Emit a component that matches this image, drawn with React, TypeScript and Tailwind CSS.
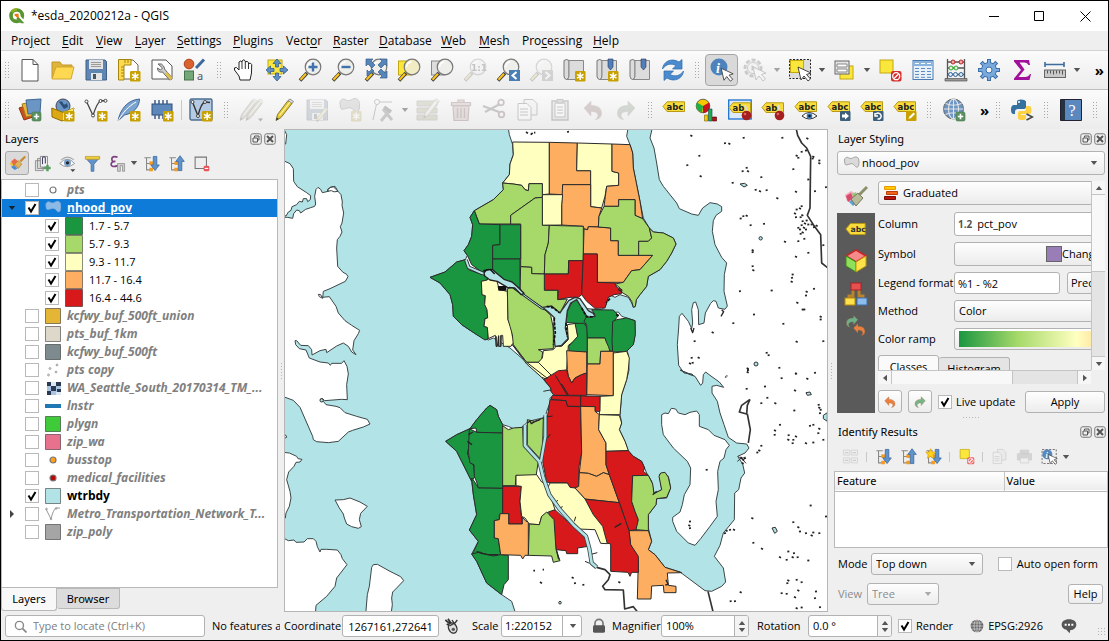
import React from "react";

type Kids = { children?: React.ReactNode };

const DARK = "#1a9641";
const LIGHT = "#a6d96a";
const PALE = "#ffffc0";
const ORANGE = "#fdae61";
const RED = "#d7191c";
const WATER = "#b2e3e6";

/* ---------- icon helpers ---------- */

function Ico({ children, className = "size-6" }: Kids & { className?: string }) {
  return (
    <svg viewBox="0 0 24 24" className={className + " shrink-0"} fill="none" aria-hidden="true">
      {children}
    </svg>
  );
}

function Star() {
  return (
    <g>
      <rect x="13" y="13" width="10.5" height="10.5" rx="1.2" fill="#c8a100" />
      <path d="M18.2 14.5v7.5M15 16.4l6.5 3.8M21.5 16.4l-6.5 3.8" stroke="#fff" strokeWidth="1.5" />
    </g>
  );
}

function Plus() {
  return (
    <g>
      <rect x="14" y="14" width="9" height="9" rx="1.5" fill="#5a9160" stroke="#467a4c" strokeWidth=".6" />
      <path d="M18.5 15.8v5.4M15.8 18.5h5.4" stroke="#fff" strokeWidth="1.6" />
    </g>
  );
}

function Lens({ fill = "#eeeeea" }: { fill?: string }) {
  return (
    <g>
      <path d="M2 22.5l7-7.5" stroke="#404040" strokeWidth="3.6" />
      <path d="M2.5 21.8l5.5-6" stroke="#fcc419" strokeWidth="2" />
      <circle cx="15" cy="9" r="7.8" fill={fill} stroke="#777" strokeWidth="1.2" />
      <path d="M9.5 9a5.5 5.5 0 0 1 5-5" stroke="#fff" strokeWidth="1.5" />
    </g>
  );
}

function Pointer() {
  return <path d="M10 9l3 13 3-4 4 5 2.5-2-4-4.500 4.500-1.500z" fill="#fff" stroke="#444" />;
}

function Tag({ y = 1, text = "abc" }: { y?: number; text?: string }) {
  return (
    <g transform={"translate(0 " + y + ")"}>
      <path d="M1 5.5L5 .8h17.500v9.700H5z" fill="#f9dc3c" stroke="#b79a12" />
      <text x="4.5" y="8.6" fontSize="8.5" fontWeight="bold" fontFamily="DejaVu Sans, sans-serif" fill="#222">
        {text}
      </text>
    </g>
  );
}

function Pin() {
  return (
    <g>
      <path d="M17 7l2.5 9" stroke="#ddd" strokeWidth="2" />
      <circle cx="18.5" cy="17.5" r="4.8" fill="#a51d1d" />
      <circle cx="17" cy="16" r="1.3" fill="#d66" />
    </g>
  );
}

function Pencil({ fill = "#e8c832" }: { fill?: string }) {
  return (
    <g>
      <path d="M4 22.5l1.500-6L16 2.500l4 3L9 19.500z" fill={fill} stroke="#77712f" strokeWidth=".9" />
      <path d="M16 2.5l2-1.500 3.500 2.500-1.500 2z" fill="#ddd" stroke="#777" strokeWidth=".8" />
      <path d="M7.5 17.500L18 4" stroke="#fff7b0" strokeWidth="1.2" />
      <path d="M4 22.5l.8-3 2 1.500z" fill="#333" />
    </g>
  );
}

function Book({ children }: Kids) {
  return (
    <g>
      <path d="M2 2.5q3-2 5 0V18q0 3-2.500 3.500Q2 21 2 18z" fill="#dcdcdc" stroke="#777" />
      <path d="M7 2.5h14.500v19H4.500Q7 21 7 18z" fill="#dcdcdc" stroke="#888" />
      {children}
    </g>
  );
}

function Undo({ color }: { color: string }) {
  return (
    <path
      d="M3 10l7-7v4.500c7 0 10.500 2.500 10.500 8 0 3-2 5.500-6 6 2-1.500 2.800-3 2.300-5-.6-2.200-3-3-6.800-3V18z"
      fill={color}
      stroke="#8a5a3c"
      strokeWidth=".5"
    />
  );
}

function Redo({ color }: { color: string }) {
  return (
    <g transform="matrix(-1 0 0 1 24 0)">
      <Undo color={color} />
    </g>
  );
}

function Tree({ up = false, star = false }: { up?: boolean; star?: boolean }) {
  return (
    <Ico className="size-[17px]">
      <path d="M2 4h9M5 4v17h7M5 12h7" stroke="#888" strokeWidth="1.5" />
      <rect x="9" y="9" width="5" height="5" fill="#f79a1e" />
      <rect x="9" y="18" width="5" height="5" fill="#f79a1e" />
      {up ? (
        <path d="M17 1l-6 8h3.500v13h5V9H23z" fill="#5f93c9" stroke="#2f5f96" />
      ) : (
        <path d="M17 22l-6-8h3.500V2h5v12H23z" fill="#5f93c9" stroke="#2f5f96" />
      )}
      {star && <path d="M8 1l2 4.500 5 .5-3.500 3.500 1 5L8 12l-4.500 2.500 1-5L1 6l5-.5z" fill="#ffd21e" stroke="#e39a00" />}
    </Ico>
  );
}

function Doc() {
  return <path d="M4 1.5h11l5 5V23H4zM15 1.500v5h5" fill="#fff" stroke="#555" />;
}

function Floppy() {
  return (
    <g>
      <path d="M2 2h19l1.500 1.500V22H2z" fill="#5f86b3" stroke="#3f5f86" />
      <rect x="5" y="2" width="14" height="9" fill="#e4e4e4" />
      <path d="M7 4.5h10M7 6.500h10M7 8.500h10" stroke="#999" />
      <rect x="7" y="15" width="11" height="7" fill="#e4e4e4" />
      <rect x="9" y="16" width="3" height="5" fill="#456" />
    </g>
  );
}

function Globe() {
  return (
    <g>
      <circle cx="11.5" cy="11" r="10" fill="#6a95c4" stroke="#666" />
      <path d="M1.5 11h20M11.500 1v20M3.500 5.500q8 3.500 16 0M3.500 16.500q8-3.500 16 0" stroke="#e4e4e4" strokeWidth="1.1" />
      <ellipse cx="11.5" cy="11" rx="5" ry="10" stroke="#e4e4e4" strokeWidth="1.1" />
    </g>
  );
}

function Blob({ fill = "#dadada", stroke = "#888" }: { fill?: string; stroke?: string }) {
  return (
    <path
      d="M2 7c1-4 4-4.500 6-3s5 1 7-.5 6-1 7 2 1 9-1 11-4-1-6-3-5-1-8 0-4 .5-4.500-2z"
      fill={fill}
      stroke={stroke}
    />
  );
}

/* ---------- small widgets ---------- */

function Grip({ w = "w-4" }: { w?: string }) {
  return (
    <span className={w + " flex shrink-0 justify-center"}>
      <span className="h-[18px] w-[6px] bg-[radial-gradient(circle,#a8a8a8_1px,transparent_1px)] bg-[length:3px_3px]" />
    </span>
  );
}

function Triangle({ up = false, color = "#555", className = "" }: { up?: boolean; color?: string; className?: string }) {
  return (
    <svg viewBox="0 0 8 5" className={"h-[4px] w-[8px] shrink-0 " + className} aria-hidden="true">
      <path d={up ? "M0 5L4 0l4 5z" : "M0 0h8L4 5z"} fill={color} />
    </svg>
  );
}

function Tool({ label, dim, active, children }: Kids & { label: string; dim?: boolean; active?: boolean }) {
  return (
    <button
      type="button"
      aria-label={label}
      disabled={dim}
      className={
        "flex h-8 w-[33px] shrink-0 items-center justify-center rounded-sm " +
        (active ? "border border-[#a5a5a5] bg-[#d9d9d9] " : "") +
        (dim ? "opacity-25 saturate-50" : "")
      }
    >
      <Ico>{children}</Ico>
    </button>
  );
}

function Arrow({ label, dim }: { label: string; dim?: boolean }) {
  return (
    <button type="button" aria-label={label} className={"flex h-8 w-3 shrink-0 items-center justify-center " + (dim ? "opacity-50" : "")}>
      <Triangle />
    </button>
  );
}

function Check({ id, checked }: { id: string; checked?: boolean }) {
  return (
    <span className="grid size-[14px] shrink-0">
      <input
        id={id}
        type="checkbox"
        defaultChecked={checked}
        className="peer col-start-1 row-start-1 size-[14px] appearance-none border border-[#b9b9b9] bg-white"
      />
      <svg viewBox="0 0 14 14" className="pointer-events-none invisible col-start-1 row-start-1 peer-checked:visible" aria-hidden="true">
        <path d="M3.5 6.500L6 10.500 10.500 3" fill="none" stroke="#000" strokeWidth="2" />
      </svg>
    </span>
  );
}

const BEVEL = "rounded-[3px] border border-[#b2b2b2] bg-linear-to-b from-[#fefefe] to-[#ececec] ";
const FIELD = "rounded-[3px] border border-[#b2b2b2] bg-white ";

function Combo({
  label,
  value,
  icon,
  className,
  pad = "pl-1",
  dim,
  arrow = true,
}: {
  label: string;
  value: string;
  icon?: React.ReactNode;
  className: string;
  pad?: string;
  dim?: boolean;
  arrow?: boolean;
}) {
  return (
    <span className={"grid items-center " + className}>
      <select
        aria-label={label}
        disabled={dim}
        defaultValue={value}
        className={"col-start-1 row-start-1 h-full w-full appearance-none " + BEVEL + pad + (dim ? " text-[#8c8c8c]" : " text-black")}
      >
        <option>{value}</option>
      </select>
      {icon && <span className="pointer-events-none col-start-1 row-start-1 pl-[6px]">{icon}</span>}
      {arrow && <Triangle color={dim ? "#aaa" : "#555"} className="pointer-events-none col-start-1 row-start-1 mr-[7px] justify-self-end" />}
    </span>
  );
}

function DockTitle({ title }: { title: string }) {
  return (
    <div className="flex h-5 shrink-0 items-center gap-[2px] pr-[2px] pl-1">
      <h2 className="flex-1 font-['Noto_Sans',sans-serif]">{title}</h2>
      <button type="button" aria-label={"Float " + title}>
        <Ico className="size-3">
          <rect x="1.5" y="1.5" width="21" height="21" rx="4" stroke="#777" strokeWidth="2" />
          <path d="M9 9V6h9v8h-3M6 10h9v8H6z" stroke="#555" strokeWidth="2" />
        </Ico>
      </button>
      <button type="button" aria-label={"Close " + title}>
        <Ico className="size-3">
          <rect x="1.5" y="1.5" width="21" height="21" rx="4" stroke="#777" strokeWidth="2" />
          <path d="M6 6l12 12M18 6L6 18" stroke="#555" strokeWidth="4" />
        </Ico>
      </button>
    </div>
  );
}

function Splitter() {
  return (
    <div className="flex w-[6px] shrink-0 items-center justify-center">
      <span className="h-[18px] w-[3px] bg-[radial-gradient(circle,#b5b5b5_1px,transparent_1px)] bg-[length:3px_3px]" />
    </div>
  );
}

/* ---------- title and menus ---------- */

function TitleBar() {
  return (
    <header className="flex h-[30px] shrink-0 items-center bg-white text-[12px]">
      <Ico className="ml-2 size-4">
        <circle cx="11.5" cy="11.5" r="8.5" stroke="#589632" strokeWidth="5.5" />
        <path d="M4 6a9 9 0 0 1 8-4" stroke="#93b023" strokeWidth="4" />
        <path d="M11 10l11 12" stroke="#fff" strokeWidth="6" />
        <path d="M14 13l9 10h-5l-7-7z" fill="#589632" />
        <path d="M8.5 8.500h6v6l-2 .5-4-4z" fill="#ee7913" />
      </Ico>
      <h1 className="ml-[6px] flex-1">*esda_20200212a - QGIS</h1>
      <div className="flex">
        <button type="button" aria-label="Minimize" className="flex h-[30px] w-[45px] items-center justify-center">
          <svg viewBox="0 0 11 11" className="size-[11px]" stroke="#000" fill="none"><path d="M0 5.5h10" /></svg>
        </button>
        <button type="button" aria-label="Maximize" className="flex h-[30px] w-[45px] items-center justify-center">
          <svg viewBox="0 0 11 11" className="size-[11px]" stroke="#000" fill="none"><path d="M.5.5h9v9h-9z" /></svg>
        </button>
        <button type="button" aria-label="Close" className="flex h-[30px] w-[46px] items-center justify-center">
          <svg viewBox="0 0 11 11" className="size-[11px]" stroke="#000" fill="none"><path d="M.5.5l10 10M10.500.5l-10 10" /></svg>
        </button>
      </div>
    </header>
  );
}

const MENUS: [string, string, string, string][] = [
  ["Pro", "j", "ect", "w-[51px]"],
  ["", "E", "dit", "w-[34px]"],
  ["", "V", "iew", "w-[39px]"],
  ["", "L", "ayer", "w-[42px]"],
  ["", "S", "ettings", "w-[56px]"],
  ["", "P", "lugins", "w-[53px]"],
  ["Vect", "o", "r", "w-[47px]"],
  ["", "R", "aster", "w-[46px]"],
  ["", "D", "atabase", "w-[62px]"],
  ["", "W", "eb", "w-[38px]"],
  ["", "M", "esh", "w-[43px]"],
  ["Pro", "c", "essing", "w-[71px]"],
  ["", "H", "elp", "w-[40px]"],
];

function MenuBar() {
  return (
    <nav className="flex h-[20px] shrink-0 items-center border-b border-[#d2d2d2] pl-[10px] text-[12px]">
      {MENUS.map(([a, b, c, w]) => (
        <button type="button" key={a + b + c} className={w + " shrink-0 text-left whitespace-nowrap"}>
          {a}
          <u className="underline-offset-2">{b}</u>
          {c}
        </button>
      ))}
    </nav>
  );
}

/* ---------- toolbars ---------- */

function ToolbarOne() {
  return (
    <div className="flex h-[39px] shrink-0 items-center border-b border-[#bdbdbd] bg-linear-to-b from-[#fbfbfb] to-[#ececec]">
      <Grip w="w-3" />
      <Tool label="New project"><Doc /></Tool>
      <Tool label="Open project">
        <path d="M1 20V4h8l2 3h10v3" fill="#e0b33a" stroke="#c2962a" />
        <path d="M1 21L5 9h18l-3 12z" fill="#fdd850" stroke="#d3a72d" />
      </Tool>
      <Tool label="Save project"><Floppy /></Tool>
      <Tool label="New print layout">
        <path d="M3 2h13l5 5v14H3z" fill="#fff" stroke="#666" />
        <path d="M1.5 1.500H14V7H7v15H1.500z" fill="#fcd94d" stroke="#a68412" />
        <path d="M4 9h3M4 12h3M4 15h3M4 18h3M8 2v3M11 2v3" stroke="#a68412" />
        <Star />
      </Tool>
      <Tool label="Layout manager">
        <path d="M2 2h14l6 6v13H2z" fill="#fff" stroke="#555" />
        <path d="M8 6q4-1 5.500 2t1 3l7 8q1 3-2 3l-7-8q-5 1-5-4l3 2 2-2z" fill="#ccc" stroke="#666" />
        <path d="M16 15l5.500 6" stroke="#e2bf4a" strokeWidth="3" />
      </Tool>
      <Tool label="Style manager">
        <circle cx="6" cy="6" r="4.8" fill="#d9622f" stroke="#a94418" />
        <path d="M13 10l8-8.500" stroke="#3e6a9c" strokeWidth="3" />
        <rect x="1.5" y="13" width="9" height="9" fill="#74a878" stroke="#47734b" />
        <text x="14" y="22" fontSize="11" fontFamily="Noto Sans, sans-serif" fill="#555">a</text>
      </Tool>
      <Grip />
      <Tool label="Pan map">
        <path d="M8 22l-1-4-4.500-6q-1-3 2-2.500L7 12V4q2-2 3 0v-1q2-2.500 3.300 0V4q2-1.500 3.200.5v1q2.500-1 3.200 1L19.500 15 18 22z" fill="#fff" stroke="#222" />
        <path d="M10 4v7M13.300 4v7M16.500 5v6" stroke="#222" strokeWidth=".9" />
      </Tool>
      <Tool label="Pan to selection">
        <rect x="3" y="2" width="14" height="14" fill="#fbe63c" stroke="#c4a80f" />
        <path d="M12 1l4 4.500h-2.500V9h-3V5.500H8zM12 23l-4-4.500h2.500V15h3v3.500H16zM1 12l4.500-4v2.500H9v3H5.500V16zM23 12l-4.500-4v2.500H15v3h3.500V16z" fill="#5f8fc4" stroke="#33608f" strokeWidth=".8" />
      </Tool>
      <Tool label="Zoom in"><Lens /><path d="M15 4.500v9M10.500 9h9" stroke="#3f72af" strokeWidth="2.4" /></Tool>
      <Tool label="Zoom out"><Lens /><path d="M10.5 9h9" stroke="#3f72af" strokeWidth="2.4" /></Tool>
      <Tool label="Zoom full">
        <Lens />
        <path d="M2 1h7L7 3l4 4-3 3-4-4-2 2zM23 1v7l-2-2-4 4-3-3 4-4-2-2zM23 20h-7l2-2-4-4 3-3 4 4 2-2zM3 18v-6l2 2 3-3 2 2z" fill="#5885b8" stroke="#355d8c" strokeWidth=".7" />
      </Tool>
      <Tool label="Zoom to selection"><rect x="1.5" y="3" width="13" height="14" fill="#fbe63c" stroke="#c4a80f" /><Lens fill="#f2ecc4" /></Tool>
      <Tool label="Zoom to layer"><rect x="1.5" y="3" width="13" height="14" fill="#ddd" stroke="#888" /><Lens /></Tool>
      <Tool label="Zoom to native resolution" dim>
        <Lens />
        <text x="8" y="12.5" fontSize="9" fontWeight="bold" fontFamily="DejaVu Sans, sans-serif" fill="#333">1:1</text>
      </Tool>
      <Tool label="Zoom last"><Lens /><rect x="13" y="12" width="11" height="11" fill="#4a7fb5" /><path d="M20.5 14l-4 3.500 4 3.500" stroke="#fff" strokeWidth="2" /></Tool>
      <Tool label="Zoom next" dim><Lens /><rect x="13" y="12" width="11" height="11" fill="#777" /><path d="M16.5 14l4 3.500-4 3.500" stroke="#fff" strokeWidth="2" /></Tool>
      <Tool label="New map view"><Book><Star /></Book></Tool>
      <Tool label="New bookmark"><Book><path d="M13 1h5v8l-2.500 3L13 9z" fill="#4f80ba" stroke="#335" strokeWidth=".6" /><Star /></Book></Tool>
      <Tool label="Show bookmarks"><Book><path d="M13 1h5v8l-2.500 3L13 9z" fill="#4f80ba" stroke="#335" strokeWidth=".6" /></Book></Tool>
      <Tool label="Refresh">
        <path d="M1.5 11C2 4 10-1 18 4l3-2.500V11h-9.500L15 7.500C10 5 5 6 1.500 11z" fill="#4a8bd0" stroke="#2f6ba8" strokeWidth=".7" />
        <path d="M22.5 13C22 20 14 25 6 20l-3 2.500V13h9.500L9 16.500c5 2.500 10 1.500 13.500-3.500z" fill="#4a8bd0" stroke="#2f6ba8" strokeWidth=".7" />
      </Tool>
      <Grip />
      <Tool label="Identify features" active>
        <circle cx="9" cy="9" r="8.5" fill="#4d82bc" />
        <text x="6" y="14.5" fontSize="14" fontStyle="italic" fontWeight="bold" fontFamily="Liberation Serif, serif" fill="#fff">i</text>
        <g transform="translate(2 2) scale(.92)"><Pointer /></g>
      </Tool>
      <Tool label="Run feature action" dim>
        <circle cx="10" cy="10" r="8" stroke="#555" strokeWidth="3" strokeDasharray="4 2" fill="#ddd" />
        <circle cx="10" cy="10" r="5.5" fill="#eee" stroke="#555" />
        <path d="M8.5 7l5 3-5 3z" fill="#555" />
        <Pointer />
      </Tool>
      <Arrow label="Action options" dim />
      <Tool label="Select features">
        <rect x="1.5" y="1.5" width="21" height="19" fill="#ddd" stroke="#222" strokeDasharray="2 1.5" />
        <rect x="2.5" y="2.5" width="13" height="12" fill="#fbe63c" stroke="#c4a80f" />
        <Pointer />
      </Tool>
      <Arrow label="Select options" />
      <Tool label="Select by value">
        <rect x="7" y="8" width="13" height="13" fill="#fbe63c" stroke="#c4a80f" />
        <rect x="2" y="3" width="14" height="13" fill="#e6e6e6" stroke="#666" />
        <path d="M4 6h10v3H4zM4 11h10v3H4z" stroke="#888" fill="#fff" />
      </Tool>
      <Arrow label="Select by value options" />
      <Tool label="Deselect features">
        <rect x="2" y="2" width="13" height="13" fill="#fbe63c" stroke="#c4a80f" />
        <rect x="13" y="13" width="10.5" height="10.5" rx="2" fill="#d42f2f" />
        <circle cx="18.2" cy="18.2" r="3.5" stroke="#fff" strokeWidth="1.3" />
        <path d="M16 20.5l4.500-4.500" stroke="#fff" strokeWidth="1.3" />
      </Tool>
      <Tool label="Open attribute table">
        <rect x="2" y="2.5" width="20" height="19" fill="#e8f1fa" stroke="#4a7ab0" />
        <path d="M2 3h20v5H2z" fill="#88b4de" />
        <path d="M4 10.500h4M10 10.500h4M16 10.500h4M4 13.500h4M10 13.500h4M16 13.500h4M4 16.500h4M10 16.500h4M16 16.500h4M4 19.300h4M10 19.300h4M16 19.300h4" stroke="#5d8dc0" />
        <path d="M4 5.500h4M10 5.500h4M16 5.500h4" stroke="#fff" />
      </Tool>
      <Tool label="Field calculator">
        <path d="M3.5 1v21M20.500 1v21M3 4h17.500M3 10h17.500M3 16.500h17.500" stroke="#555" strokeWidth="1.3" />
        <path d="M1 20.500h22v2.500H1z" fill="#999" stroke="#555" strokeWidth=".7" />
        <circle cx="9" cy="4" r="2" fill="#f4a9a9" stroke="#b22" /><circle cx="17" cy="4" r="2" fill="#f4a9a9" stroke="#b22" />
        <circle cx="7" cy="10" r="2" fill="#dff3df" stroke="#3a3" /><circle cx="12" cy="10" r="2" fill="#dff3df" stroke="#3a3" />
        <circle cx="6.5" cy="16.5" r="2" fill="#dbe9f8" stroke="#369" /><circle cx="11.5" cy="16.5" r="2" fill="#dbe9f8" stroke="#369" /><circle cx="17" cy="16.5" r="2" fill="#dbe9f8" stroke="#369" />
      </Tool>
      <Tool label="Processing toolbox">
        <path d="M12 1v22M1 12h22M4.200 4.200l15.600 15.600M19.800 4.200L4.200 19.800" stroke="#3d70aa" strokeWidth="4" />
        <circle cx="12" cy="12" r="7.5" fill="#7aa9dc" stroke="#3d70aa" />
        <path d="M12 2v20M2 12h20M4.900 4.900l14.200 14.200M19.100 4.900L4.900 19.100" stroke="#7aa9dc" strokeWidth="2" />
        <circle cx="12" cy="12" r="3" fill="#f4f4f4" stroke="#3d70aa" />
      </Tool>
      <Tool label="Statistical summary">
        <path d="M4 2h15l1 5h-1.500q-1-2.500-4-2.500H9.500l5 7-6 7.500h6.500q3.500 0 5-3H21l-1.500 6H4v-1.500L11 12 4 3.500z" fill="#a0109a" />
      </Tool>
      <Tool label="Measure line">
        <path d="M2 6.500h19M2 4v5M21 4v5" stroke="#3e6a9c" strokeWidth="1.6" />
        <rect x="1.5" y="12" width="21" height="7.5" fill="#c9c9c9" stroke="#666" />
        <path d="M4.5 12.500v3M7.500 12.500v3M10.500 12.500v4M13.500 12.500v3M16.500 12.500v3M19.500 12.500v4" stroke="#555" />
      </Tool>
      <Arrow label="Measure options" />
      <button type="button" aria-label="More tools" className="mr-1 ml-auto text-[15px] leading-5 font-bold">»</button>
    </div>
  );
}

function ToolbarTwo() {
  return (
    <div className="flex h-[39px] shrink-0 items-center bg-linear-to-b from-[#fbfbfb] to-[#ececec]">
      <Grip w="w-3" />
      <Tool label="Data source manager">
        <path d="M1 10l9-3 5 12-9 3z" fill="#c8501d" stroke="#8f3511" />
        <path d="M4 6l10-2 3 13-9 2z" fill="#e8b53a" stroke="#a77b14" />
        <path d="M8 2l15-1-1 14-12 1z" fill="#6a95c4" stroke="#406894" />
        <Plus />
      </Tool>
      <Tool label="New geopackage layer">
        <circle cx="12" cy="8" r="7" fill="#6a95c4" stroke="#445" />
        <path d="M8 4q3-2 4 1t4 0l1 4-4 2z" fill="#2e4f78" />
        <path d="M.8 10l11.500 4.500L23 10l-3 10-9 3-10-4z" fill="#dda912" stroke="#8d6e05" />
        <path d="M12.300 14.500L12 22.500l8-3 3-9.500z" fill="#ffe95c" />
        <Star />
      </Tool>
      <Tool label="New shapefile layer">
        <path d="M2.5 3.500L9 17.500q4-13 8-15l5 .5" stroke="#444" strokeWidth="1.3" />
        <g fill="#fff" stroke="#444"><circle cx="2.5" cy="3.5" r="1.5" /><circle cx="9" cy="17.5" r="1.5" /><circle cx="16.5" cy="3" r="1.5" /><circle cx="21.5" cy="2.8" r="1.5" /></g>
        <Star />
      </Tool>
      <Tool label="New spatialite layer">
        <path d="M1 23C3 12 10 2 22.500 1c0 7-5 14-15 16z" fill="#7ba3cf" stroke="#3f6693" />
        <path d="M1 23C6 14 12 8 19 4" stroke="#fff" />
        <Star />
      </Tool>
      <Tool label="New temporary layer">
        <rect x="2" y="6" width="20" height="11" fill="#5c88bb" stroke="#2e4f78" />
        <path d="M5 2v4M9 2v4M13 2v4M17 2v4M5 17v4M9 17v4M13 17v4" stroke="#33547e" strokeWidth="1.4" />
        <Star />
      </Tool>
      <span className="flex w-[6px] justify-center"><span className="h-5 w-px bg-[#c8c8c8]" /></span>
      <Tool label="New virtual layer">
        <rect x="1" y="1" width="22" height="21" rx="1.5" fill="#b5cbe3" stroke="#4c6d92" strokeWidth="1.4" />
        <path d="M3.5 4L9 18q3-13 7-14l5 .5" stroke="#333" strokeWidth="1.4" />
        <g fill="#fff" stroke="#444"><circle cx="3.5" cy="4" r="1.5" /><circle cx="9" cy="18" r="1.5" /><circle cx="16" cy="4" r="1.5" /></g>
        <Star />
      </Tool>
      <Grip w="w-[17px]" />
      <Tool label="Current edits" dim><g transform="translate(-3 0)"><Pencil fill="#a89a8a" /></g><g transform="translate(3 0)"><Pencil fill="#a89a8a" /></g><path d="M19 20.500h5l-2.500 3z" fill="#000" /></Tool>
      <Tool label="Toggle editing"><Pencil /></Tool>
      <Tool label="Save edits" dim><Floppy /><g transform="translate(9 9) scale(.65)"><Pencil /></g></Tool>
      <Tool label="Add polygon" dim><g transform="translate(0 -2) scale(.95)"><Blob fill="#aaa" stroke="#555" /></g><Star /></Tool>
      <Tool label="Vertex tool" dim><path d="M2 22L6 4h15" stroke="#444" /><circle cx="6" cy="4" r="2.5" fill="#fff" stroke="#444" /><path d="M10 23l9-11M12 11l9 11" stroke="#555" strokeWidth="3" /><path d="M13 9l7 5" stroke="#333" strokeWidth="3.5" /></Tool>
      <Arrow label="Vertex options" dim />
      <Tool label="Modify attributes" dim><path d="M1 3h20v5H1zM1 10h20v5H1zM1 17h20v5H1z" fill="#a5a05a" stroke="#777" /><g transform="translate(4 0) scale(.9)"><Pencil fill="#ccc" /></g></Tool>
      <Tool label="Delete selected" dim><path d="M4 8h16l-1 14.500H5zM2.500 4.500h19v3h-19zM9 4.500V2h6v2.500" fill="#c99" stroke="#833" strokeWidth="1.2" /><path d="M8.5 10v10M12 10v10M15.500 10v10" stroke="#833" strokeWidth="1.4" /></Tool>
      <Tool label="Cut features" dim><path d="M1 8l16 6M3 14L18 6" stroke="#444" strokeWidth="2" /><circle cx="19" cy="4.5" r="2.8" stroke="#733" strokeWidth="1.8" /><circle cx="19.5" cy="16.5" r="2.8" stroke="#733" strokeWidth="1.8" /></Tool>
      <Tool label="Copy features" dim><path d="M9 1.500h9l4 4V17H9z" fill="#eee" stroke="#444" /><path d="M3 5.500h9l4 4V22H3z" fill="#fff" stroke="#444" /><path d="M5 11h8M5 14h8M5 17h8" stroke="#444" /></Tool>
      <Tool label="Paste features" dim><path d="M4 3h16v19H4z" fill="#ccc" stroke="#444" strokeWidth="1.4" /><path d="M7 5h10v14H7z" fill="#fff" stroke="#444" /><path d="M9 1.500h6V5H9z" fill="#999" stroke="#444" /><path d="M9 9h6M9 12h6M9 15h6" stroke="#444" /></Tool>
      <Tool label="Undo" dim><Undo color="#955" /></Tool>
      <Tool label="Redo" dim><Redo color="#686" /></Tool>
      <Grip w="w-[15px]" />
      <Tool label="Layer labeling options"><Tag y={3} /></Tool>
      <Tool label="Layer diagram options">
        <circle cx="8" cy="8" r="6.8" fill="#f5c800" stroke="#333" strokeWidth=".7" />
        <path d="M8 8L2 4.500a7 7 0 0 0 5 10z" fill="#1fae4b" /><path d="M8 8l6-3.500a7 7 0 0 1-6 10.500z" fill="#c8131c" />
        <path d="M9.5 17h3.500v6H9.500z" fill="#f5c800" stroke="#7a6400" strokeWidth=".6" /><path d="M13.5 11h3.500v12h-3.500z" fill="#1fae4b" stroke="#145" strokeWidth=".6" /><path d="M17.5 19h4v4h-4z" fill="#b3131c" stroke="#500" strokeWidth=".6" />
      </Tool>
      <Tool label="Highlight pinned labels"><rect x=".7" y="2" width="22.5" height="19" fill="#dbe9f8" stroke="#1c72d0" strokeWidth="1.3" /><Tag y={4} text="ab" /><Pin /></Tool>
      <Tool label="Pin labels"><Tag y={4} text="ab" /><Pin /></Tool>
      <Tool label="Show hidden labels"><Tag y={3} /><path d="M8 18q7-7 15 0-8 6-15 0z" fill="#fff" stroke="#333" /><circle cx="15.5" cy="18" r="2.8" fill="#3a76b8" /><circle cx="15.5" cy="18" r="1.2" fill="#111" /></Tool>
      <Tool label="Move label"><Tag y={3} /><rect x="13" y="13" width="10.5" height="10" rx="1" fill="#3d5f7c" /><path d="M15 16.500h3v-2l4 3.500-4 3.500v-2h-3z" fill="#fff" /></Tool>
      <Tool label="Rotate label"><Tag y={3} /><rect x="13" y="13" width="10.5" height="10" rx="1" fill="#3d5f7c" /><path d="M16 16a3 3 0 1 1 1.500 5M15 15v3h3" stroke="#fff" strokeWidth="1.5" /></Tool>
      <Tool label="Change label"><Tag y={3} /><rect x="13" y="13" width="10.5" height="10" rx="1" fill="#c8a100" /><path d="M15.5 21l1-2.500 4-4 1.500 1.500-4 4z" fill="#fff" /></Tool>
      <Grip />
      <Tool label="Metasearch"><Globe /><Plus /></Tool>
      <button type="button" aria-label="More label tools" className="w-[21px] pl-2 text-[15px] leading-5 font-bold">»</button>
      <Grip w="w-[14px]" />
      <Tool label="Python console">
        <path d="M7 7V3.500Q7 1.500 11 1.500t5 2V9q0 2-2 2H8q-3 0-3 3v2H3.500Q1 16 1 11.500T4 7h8" fill="#35709f" />
        <path d="M16 8h3q2.500 0 2.500 4T19 16h-8v1h5v3q0 2-4 2t-4-2v-5q0-2 2-2h4q2 0 2-2z" fill="#fdd144" />
        <circle cx="9" cy="4" r="1" fill="#fff" />
        <path d="M16.5 16l6 3-6 3" stroke="#444" strokeWidth="1.5" />
      </Tool>
      <Grip />
      <Tool label="Help contents">
        <path d="M1.5 1.500h21v21h-21z" fill="#5b88bf" stroke="#223" />
        <path d="M2 2h4v20H2z" fill="#26323f" />
        <text x="9.5" y="17.5" fontSize="16" fontFamily="Liberation Serif, serif" fill="#fff">?</text>
      </Tool>
      <Grip />
    </div>
  );
}

/* ---------- layers panel ---------- */

function Eye() {
  return (
    <>
      <path d="M1 12q11-12 21 0-11 9-21 0z" fill="#fff" stroke="#888" strokeWidth="1.2" />
      <circle cx="12" cy="11" r="5" fill="#7ba3cf" />
      <circle cx="12" cy="11" r="2.3" fill="#222" />
      <path d="M3 7q9-8 18 0" stroke="#aaa" strokeWidth="1.5" />
      <path d="M16 20h7l-3.500 4z" fill="#444" />
    </>
  );
}

type Sym = { kind: "fill" | "dot" | "poly" | "points" | "raster" | "line" | "vline"; color?: string };

function Symbol({ kind, color }: Sym) {
  const c = "size-4 shrink-0";
  switch (kind) {
    case "fill":
      return <svg viewBox="0 0 16 16" className={c}><path d="M.5.5h15v15H.5z" fill={color} stroke="#000" strokeOpacity=".45" /></svg>;
    case "dot":
      return <svg viewBox="0 0 16 16" className={c}><circle cx="8" cy="8" r="3" fill={color} stroke="#777" strokeWidth="1.2" /></svg>;
    case "poly":
      return <Ico className={c}><g transform="translate(-1 -1) scale(1.1)"><Blob fill="#8db9e6" stroke="#7aa8d8" /></g></Ico>;
    case "points":
      return <svg viewBox="0 0 16 16" className={c} fill="#fff" stroke="#999"><circle cx="12" cy="3" r=".9" /><circle cx="5" cy="6.5" r=".9" /><circle cx="11" cy="10" r=".9" /><circle cx="3.5" cy="13" r=".9" /></svg>;
    case "raster":
      return (
        <svg viewBox="0 0 16 16" className={c}>
          <path d="M2 2h14v13H2z" fill="#a9c4e2" /><path d="M2 2h4v4H2zM11 2h5v4h-5zM6 6h5v5H6zM2 11h4v4H2zM12 9h4v3h-4z" fill="#2b3a50" /><path d="M6 2h5v4H6zM11 12h5v3h-5z" fill="#dde8f4" />
        </svg>
      );
    case "line":
      return <svg viewBox="0 0 16 16" className={c}><path d="M0 8h16" stroke="#1f78b4" strokeWidth="4" /></svg>;
    case "vline":
      return <svg viewBox="0 0 16 16" className={c} fill="none" stroke="#999"><path d="M1 3l5 10Q8 4 11 2h4" /><circle cx="1.5" cy="3" r=".8" /><circle cx="6" cy="13" r=".8" /><circle cx="11" cy="2.5" r=".8" /></svg>;
  }
}

const CLASSES: [string, string][] = [
  ["1.7 - 5.7", DARK],
  ["5.7 - 9.3", LIGHT],
  ["9.3 - 11.7", PALE],
  ["11.7 - 16.4", ORANGE],
  ["16.4 - 44.6", RED],
];

const LAYERS: { name: string; sym: Sym; on?: boolean; expand?: boolean }[] = [
  { name: "kcfwy_buf_500ft_union", sym: { kind: "fill", color: "#e5b636" } },
  { name: "pts_buf_1km", sym: { kind: "fill", color: "#ddd8c9" } },
  { name: "kcfwy_buf_500ft", sym: { kind: "fill", color: "#7d8b8f" } },
  { name: "pts copy", sym: { kind: "points" } },
  { name: "WA_Seattle_South_20170314_TM_...", sym: { kind: "raster" } },
  { name: "lnstr", sym: { kind: "line" } },
  { name: "plygn", sym: { kind: "fill", color: "#3fcb39" } },
  { name: "zip_wa", sym: { kind: "fill", color: "#e8718d" } },
  { name: "busstop", sym: { kind: "dot", color: "#ff9e17" } },
  { name: "medical_facilities", sym: { kind: "dot", color: "#b80808" } },
  { name: "wtrbdy", sym: { kind: "fill", color: WATER }, on: true },
  { name: "Metro_Transportation_Network_T...", sym: { kind: "vline" }, expand: true },
  { name: "zip_poly", sym: { kind: "fill", color: "#a5a5a5" } },
];

function LayerRow({ name, sym, on, expand }: { name: string; sym: Sym; on?: boolean; expand?: boolean }) {
  return (
    <li className="flex h-[18px] items-center gap-[6px] pl-[6px]">
      <svg viewBox="0 0 8 8" className="mr-[3px] size-2 shrink-0" aria-hidden="true">
        {expand && <path d="M2 0l4 4-4 4z" fill="#444" />}
      </svg>
      <Check id={"layer-" + name} checked={on} />
      <Symbol {...sym} />
      <label htmlFor={"layer-" + name} className={"font-bold whitespace-nowrap " + (on ? "text-black" : "font-['Noto_Sans',sans-serif] text-[#808080] italic")}>
        {name}
      </label>
    </li>
  );
}

function PanelTool({ label, active, children }: Kids & { label: string; active?: boolean }) {
  return (
    <button type="button" aria-label={label} className={"flex size-6 shrink-0 items-center justify-center rounded-[3px] " + (active ? "border border-[#a8a8a8] bg-[#dadada]" : "")}>
      {children}
    </button>
  );
}

function LayersPanel() {
  const s = "size-[17px]";
  return (
    <aside className="flex w-[277px] shrink-0 flex-col">
      <DockTitle title="Layers" />
      <div className="flex h-[30px] shrink-0 items-center gap-[1px] px-1 pb-[2px]">
        <PanelTool label="Open layer styling" active>
          <Ico className={s}><path d="M1 12l7-6 6 7-8 7z" fill="#f0c23c" /><path d="M3 9l5-4 5 4-6 6z" fill="#e86a4a" /><path d="M3 17l4-3 5 5-4 2z" fill="#4d8bd6" /><path d="M8 13l5-5 5 5-5 6z" fill="#e2b45d" stroke="#b07a28" /><path d="M16 9l7-7" stroke="#c98a30" strokeWidth="3" /></Ico>
        </PanelTool>
        <PanelTool label="Add group">
          <Ico className={s}><path d="M2 8h11v14H2zM5 5h11v14H5z" fill="#ddd" stroke="#777" /><path d="M9 2h10v15H9z" fill="#f3f3f3" stroke="#666" /><path d="M12 13V4q2-3 4 0v8" stroke="#446" strokeWidth="1.5" /><path d="M19 14v9M14.500 18.500h9" stroke="#5a9e62" strokeWidth="3.5" /></Ico>
        </PanelTool>
        <PanelTool label="Manage map themes"><Ico className={s}><Eye /></Ico></PanelTool>
        <PanelTool label="Filter legend">
          <Ico className={s}><path d="M2 4h20l-8 9v10h-4V13z" fill="#5f93c9" stroke="#3d6a9c" /><path d="M2 2h20v4H2z" fill="#f0cf3f" stroke="#b8972a" /></Ico>
        </PanelTool>
        <PanelTool label="Filter by expression">
          <Ico className={s}><path d="M12 3Q4 1 4 5.500T9 9q-6 0-6 4.500T13 15" stroke="#7d3f80" strokeWidth="2.4" /><path d="M12 12h10v11h-3v-8h-3v8h-4z" fill="#ccc" stroke="#888" /></Ico>
        </PanelTool>
        <span className="flex w-2 justify-center"><Triangle /></span>
        <PanelTool label="Expand all"><Tree /></PanelTool>
        <PanelTool label="Collapse all"><Tree up /></PanelTool>
        <PanelTool label="Remove layer">
          <Ico className={s}><path d="M3 3h16v16H3z" fill="#eee" stroke="#777" strokeWidth="1.5" /><rect x="15" y="15" width="8" height="8" rx="2" fill="#e8555a" /><path d="M16.5 19h5" stroke="#fff" strokeWidth="1.6" /></Ico>
        </PanelTool>
      </div>
      <ul className="min-h-0 flex-1 overflow-hidden border border-[#b9b9b9] bg-white pt-px text-[12px] leading-[18px]">
        <LayerRow name="pts" sym={{ kind: "dot", color: "#fff" }} />
        <li className="flex h-[18px] items-center gap-[6px] bg-[#0f7bd9] pl-[6px]">
          <Triangle color="#123" className="mr-[3px]" />
          <Check id="layer-nhood" checked />
          <Symbol kind="poly" />
          <label htmlFor="layer-nhood" className="font-bold text-white underline underline-offset-1">nhood_pov</label>
        </li>
        {CLASSES.map(([name, color]) => (
          <li key={name} className="flex h-[18px] items-center gap-[6px] pl-[43px] text-[11px]">
            <Check id={"class-" + name} checked />
            <svg viewBox="0 0 18 18" className="size-[18px] shrink-0"><path d="M.5.5h17v17H.5z" fill={color} stroke="#000" strokeOpacity=".45" /></svg>
            <label htmlFor={"class-" + name}>{name}</label>
          </li>
        ))}
        {LAYERS.map((l) => (
          <LayerRow key={l.name} {...l} />
        ))}
      </ul>
      <div className="flex h-6 shrink-0 items-start font-['Noto_Sans',sans-serif]" role="tablist">
        <button type="button" role="tab" aria-selected="true" className="h-[23px] w-[56px] rounded-b-[3px] border border-t-0 border-[#b9b9b9] bg-[#f8f8f8]">Layers</button>
        <button type="button" role="tab" aria-selected="false" className="h-[21px] w-[63px] rounded-b-[3px] border border-l-0 border-[#b9b9b9] bg-[#dcdcdc]">Browser</button>
      </div>
    </aside>
  );
}

/* ---------- map ---------- */

const LAND = [
  "M10 0L20 20 17 48 10 50z",
  "M10 98L30 107 40 122 41 160 52 176 80 194 92 203 91 215 83 221 80 212 70 212 67 222 58 220 50 230 36 236 33 247 25 252 18 264 10 262z",
  "M10 268L22 268 38 271 41 257 50 246 58 248 62 255 77 244 92 239 104 235 107 228 104 205 108 184 114 178 122 184 127 194 145 190 143 184 152 178 165 175 174 190 183 200 187 222 186 232 191 255 186 285 181 296 186 312 180 325 172 335 170 360 173 415 188 432 200 439 204 446 196 460 150 482 130 490 128 511 118 506 115 499 122 500 126 508 148 506 168 535 175 555 195 578 215 592 239 607 235 617 222 638 218 666 228 680 215 672 205 655 190 645 170 654 140 674 138 664 120 668 96 681 95 665 85 653 62 652 50 638 45 638 47 650 58 662 78 666 88 690 120 702 145 705 151 712 155 706 185 706 192 698 201 715 205 738 200 770 202 815 185 814 134 818 128 812 121 813 122 820 130 820 138 830 168 835 180 839 195 854 230 865 262 874 270 888 250 897 218 907 205 912 175 940 145 944 110 941 100 935 98 925 60 838 40 817 10 806z",
  "M10 920L18 922 20 928 10 932z",
  "M10 973L28 975 50 985 54 992 66 994 60 1002 48 1003 42 1015 26 1032 20 1055 30 1090 33 1110 28 1135 18 1155 16 1170 10 1172z",
  "M10 1230L25 1238 42 1236 48 1243 72 1242 82 1232 100 1232 108 1240 112 1256 120 1272 123 1264 140 1264 172 1266 183 1280 187 1292 201 1310 184 1332 170 1350 165 1375 140 1405 108 1432 106 1460 10 1460z",
  "M165 1116L190 1115 210 1110 240 1122 262 1135 242 1156 238 1175 244 1196 235 1201 215 1196 200 1188 193 1170 190 1158 178 1140z",
  "M275 1318L280 1310 292 1309 330 1330 362 1346 371 1358 350 1380 338 1392 335 1410 337 1430 333 1460 257 1460 262 1400 268 1375z",
  "M684 -5L688 20 698 50 700 80 690 108 688 140 668 165 670 185 640 215 583 248 570 268 578 290 575 325 565 350 552 368 562 382 556 395 530 402 495 432 450 448 480 465 510 500 518 530 520 565 545 590 590 620 625 636 640 630 690 660 740 703 785 748 812 780 815 812 800 850 796 868 745 880 725 898 700 902 685 895 668 890 655 865 650 845 630 832 620 840 590 875 570 902 530 920 497 940 530 970 545 1000 575 1060 580 1100 590 1160 568 1206 595 1240 575 1278 590 1300 620 1365 665 1400 695 1420 708 1460 1650 1460 1650 -5z",
];

const LAKE =
  "M1045 -5L1040 25 1050 50 1058 75 1060 120 1068 160 1080 220 1090 270 1108 300 1120 312 1150 315 1180 330 1188 348 1175 375 1160 400 1140 425 1105 445 1100 475 1080 500 1069 515 1066 535 1060 538 1055 525 1045 508 1020 500 1005 508 992 502 982 512 978 532 965 545 920 542 912 548 920 565 950 560 1015 552 1025 565 1065 578 1065 620 1060 650 1040 665 1045 680 1047 726 1040 755 1025 800 1020 860 1025 885 1018 905 1035 940 1045 970 1060 985 1085 1000 1100 1035 1115 1060 1122 1097 1145 1085 1138 1040 1150 1035 1165 1045 1172 1080 1160 1110 1130 1112 1128 1130 1105 1160 1105 1200 1115 1240 1105 1265 1125 1280 1155 1318 1200 1332 1275 1388 1295 1390 1325 1375 1337 1362 1330 1320 1303 1285 1320 1252 1330 1215 1363 1175 1364 1095 1376 1085 1383 1050 1394 1035 1388 1008 1373 985 1395 975 1407 960 1400 948 1370 945 1345 928 1332 890 1320 855 1312 820 1296 795 1296 775 1310 772 1331 778 1318 762 1290 742 1277 732 1270 740 1268 765 1262 772 1245 745 1225 738 1200 726 1240 742 1235 738 1212 735 1196 712 1192 650 1196 600 1198 565 1206 556 1225 580 1235 602 1238 585 1235 545 1240 524 1247 522 1255 545 1256 590 1272 585 1276 555 1292 526 1300 518 1308 520 1315 540 1335 544 1342 534 1332 490 1333 440 1340 405 1325 388 1305 350 1297 310 1300 278 1308 262 1325 250 1325 236 1312 228 1290 224 1268 240 1255 262 1235 258 1198 242 1190 225 1150 175 1138 155 1130 105 1122 60 1110 30 1118 -5z";

const MERCER =
  "M1145 860L1155 855 1165 857 1174 841 1187 843 1195 855 1215 860 1230 853 1250 849 1258 860 1258 895 1285 905 1302 922 1335 935 1348 952 1338 965 1332 990 1320 1000 1313 1030 1315 1085 1308 1120 1312 1165 1290 1195 1262 1232 1245 1252 1225 1245 1190 1210 1178 1180 1178 1168 1200 1152 1207 1130 1213 1100 1230 1070 1232 1020 1222 1000 1180 960 1150 920 1145 890z";

const HOODS: [string, string][] = [
  [PALE, "698 42 808 43 808 198 787 200 787 167 747 167 745 188 735 185 725 172 700 168 668 165 688 140 690 108 700 80"],
  [ORANGE, "808 43 892 45 890 128 932 128 932 170 848 170 848 200 808 198"],
  [PALE, "892 45 996 48 996 130 1016 135 1016 172 980 175 975 205 965 240 932 236 932 128 890 128"],
  [ORANGE, "996 48 1050 50 1058 75 1060 120 1068 160 1080 220 1088 272 1065 262 1065 215 1016 215 1016 235 972 235 976 205 980 175 1016 172 1016 135 996 130"],
  [ORANGE, "848 170 932 170 932 236 965 240 957 265 955 297 925 296 923 305 912 303 910 295 845 291 845 230"],
  [PALE, "787 200 848 200 845 230 845 291 787 292"],
  [LIGHT, "668 165 700 168 725 172 735 185 745 188 747 167 787 167 787 208 765 210 692 262 692 288 598 288 583 248 640 215 670 185"],
  [LIGHT, "787 208 787 292 808 292 805 345 795 380 793 438 755 437 755 418 722 416 722 288 692 288 692 262 765 210"],
  [LIGHT, "808 292 910 295 910 398 866 398 865 438 793 438 795 380 805 345"],
  [ORANGE, "912 303 923 305 925 296 955 297 992 300 992 338 1015 338 1015 382 1118 382 1080 425 1055 428 1030 463 952 463 952 378 910 378"],
  [LIGHT, "957 265 972 235 1016 235 1016 215 1065 215 1065 262 1088 272 1108 300 1115 330 1105 340 1076 340 1076 382 1015 382 1015 338 992 338 992 300 955 297"],
  [LIGHT, "1108 300 1120 312 1150 315 1180 330 1188 348 1175 375 1160 400 1140 425 1105 445 1100 475 1080 500 1069 515 1066 535 1060 538 1055 520 1045 505 1024 492 1020 480 1005 468 1030 463 1055 428 1080 425 1118 382 1076 382 1076 340 1105 340 1115 330"],
  [RED, "866 398 910 398 905 500 895 508 870 508 833 515 835 487 793 487 793 438 865 438"],
  [RED, "910 378 952 378 952 463 1005 465 1010 478 1026 485 1024 497 1002 500 985 508 975 540 945 541 920 520 905 500"],
  [LIGHT, "722 416 755 418 755 437 793 438 793 487 833 487 833 515 862 513 845 545 840 555 815 545 785 538 725 495 720 478"],
  [DARK, "583 248 598 288 660 290 660 350 638 352 638 430 605 432 575 410 562 382 552 368 565 350 575 325 578 290 570 268"],
  [DARK, "660 290 722 290 722 393 638 393 638 352 660 350"],
  [DARK, "638 393 720 393 720 480 690 466 655 448 638 428"],
  [DARK, "556 395 530 402 495 432 450 448 480 465 510 500 518 530 520 565 545 590 590 620 615 636 625 632 622 598 612 595 615 572 623 570 621 545 614 530 616 503 606 500 604 460 622 456 624 445 600 437 565 425"],
  [PALE, "604 460 622 456 624 445 648 450 658 485 682 490 684 575 695 600 697 625 720 655 718 662 698 647 693 655 670 655 668 622 664 622 663 655 657 655 656 625 652 655 648 655 646 622 625 632 622 598 612 595 615 572 623 570 621 545 614 530 616 503 606 500"],
  [LIGHT, "682 482 700 478 730 500 790 540 812 562 820 600 820 662 775 665 788 672 785 695 775 703 740 703 700 650 697 620 690 595 684 575"],
  [PALE, "697 650 740 703 775 703 815 740 820 755 795 752 785 748 740 708"],
  [PALE, "775 703 787 690 790 668 820 665 828 655 845 655 865 635 862 590 888 586 890 600 893 625 882 640 865 652 860 725 830 742 818 746"],
  [DARK, "890 512 910 535 922 565 930 590 858 583 862 550 875 525"],
  [DARK, "885 586 912 586 922 600 922 672 868 670 866 655 893 625"],
  [DARK, "918 568 945 560 935 545 1000 546 1015 562 1002 580 998 620 1000 672 985 665 975 630 922 630 920 590 912 580"],
  [DARK, "998 580 1010 575 1040 570 1065 578 1066 620 1060 650 1040 670 998 672 996 640"],
  [LIGHT, "922 630 975 630 978 640 985 655 990 670 962 670 960 708 922 708"],
  [ORANGE, "860 668 920 672 920 735 905 740 885 750 875 765 865 745 862 725"],
  [ORANGE, "922 708 960 708 962 670 1000 670 1000 803 920 800"],
  [PALE, "1000 675 1040 670 1048 690 1045 726 1040 755 1025 800 1020 860 958 860 960 805 1000 803"],
  [RED, "792 755 835 728 860 726 865 745 875 765 885 750 905 740 920 735 920 802 815 802 812 780"],
  [RED, "815 802 960 805 960 850 945 850 945 836 902 835 862 835 858 818 815 815"],
  [RED, "810 815 858 818 862 835 902 836 905 975 897 1015 896 1075 885 1080 870 1078 862 1065 810 1064 800 1062 788 1000 790 960 800 930 800 880"],
  [ORANGE, "902 835 945 836 945 850 958 860 956 905 978 945 978 1010 988 1040 970 1034 950 1045 925 1036 898 1034 905 975"],
  [ORANGE, "898 1034 925 1036 950 1045 970 1034 988 1040 1018 1124 915 1113 885 1080 896 1075"],
  [PALE, "958 860 1018 862 1025 885 1018 905 1035 940 1045 968 978 970 978 945 956 905"],
  [RED, "978 970 1045 968 1060 985 1085 1000 1094 1020 1090 1030 1105 1042 1058 1043 1055 1120 1065 1150 1075 1175 1070 1205 1047 1208 1018 1124 988 1040 978 1010"],
  [LIGHT, "1058 1043 1105 1042 1118 1068 1122 1097 1145 1085 1137 1045 1142 1035 1155 1033 1165 1048 1172 1080 1160 1108 1130 1112 1128 1130 1105 1160 1105 1208 1068 1205 1075 1175 1065 1150 1055 1120"],
  [ORANGE, "1047 1208 1105 1208 1115 1240 1105 1265 1125 1280 1155 1318 1205 1334 1162 1335 1165 1372 1188 1375 1188 1394 1152 1394 1150 1372 1115 1374 1113 1413 1072 1413 1075 1300 1052 1250"],
  [RED, "910 1113 1018 1124 1047 1208 1052 1250 1075 1285 1075 1333 1055 1333 1050 1345 1044 1333 992 1330 992 1248 980 1245 965 1200 940 1160"],
  [PALE, "810 1065 862 1065 870 1078 885 1080 915 1113 940 1160 968 1195 982 1247 962 1246 945 1205 895 1203 860 1170 815 1120 800 1085"],
  [RED, "805 1150 825 1145 862 1180 895 1208 920 1225 925 1255 893 1260 893 1277 860 1277 858 1268 828 1265 822 1200"],
  [DARK, "497 940 530 920 570 902 575 925 562 975 572 1005 580 1010 585 1045 575 1060 545 1000 530 970"],
  [DARK, "570 902 590 875 620 840 630 832 650 845 655 865 668 890 668 915 590 913 588 900"],
  [DARK, "568 902 590 913 668 915 668 1081 595 1080 590 1062 583 1045 582 1010 570 1005 565 975"],
  [DARK, "583 1060 595 1080 668 1081 668 1157 658 1160 658 1175 643 1178 643 1230 655 1232 662 1280 640 1284 595 1275 578 1278 595 1240 568 1206 590 1160 580 1100 575 1050"],
  [DARK, "575 1278 600 1272 615 1278 640 1284 662 1280 685 1282 685 1355 672 1370 665 1400 620 1365 590 1300"],
  [LIGHT, "668 893 685 905 700 900 728 898 730 955 775 1000 768 1045 708 1042 706 1073 668 1073"],
  [LIGHT, "742 875 765 880 790 870 787 988 778 990 742 950"],
  [RED, "668 1075 724 1075 720 1120 724 1165 727 1188 686 1188 686 1157 668 1157"],
  [ORANGE, "660 1157 686 1157 686 1188 727 1188 727 1168 738 1180 745 1180 745 1282 735 1282 728 1293 722 1282 662 1280 655 1232 643 1230 643 1178 658 1175"],
  [PALE, "708 1042 770 1040 785 1062 800 1068 825 1145 805 1152 785 1165 778 1190 748 1188 735 1170 725 1165 720 1120 724 1075 708 1073"],
  [LIGHT, "748 1188 778 1190 785 1165 800 1152 822 1175 828 1265 840 1298 820 1303 815 1284 745 1282"],
];

/* Small ponds east of the lake, as x y pairs */
const SPECKS_NORTH =
  "424 22 581 30 697 30 772 30 54 12 525 46 538 46 448 84 412 112 452 143 590 120 578 130 594 128 634 148 548 165 630 188 650 187 617 186 682 209 730 124 755 72 740 82 745 90 768 68 790 85 788 92 808 98 808 104 828 178 795 190 738 190 775 155 740 245 735 255 738 268 755 235 750 240 580 265 572 272 590 262 602 292 642 288 705 340 763 333 745 340 738 385 775 375 820 352 608 365 608 373 608 415 610 425 728 440 726 450 725 460 570 490 665 488 770 490 792 483 768 503 742 523 758 545 763 545 812 565 812 575 550 586 488 612 612 560 700 588 740 640 820 640 434 640 446 688 425 690 428 705 420 705 650 675 656 682 593 720 594 727 688 720 738 735 795 735 758 280 765 285 770 278 755 292 762 298 775 290 768 305 758 312 750 305 752 268 757 260 785 290 792 298 800 292 752 318 745 300";
const SPECKS_SOUTH =
  "593 5 695 25 738 12 772 25 590 57 652 84 676 98 634 100 645 50 735 60 733 122 690 165 675 180 674 195 716 196 715 208 730 210 728 220 738 198 790 165 805 190 768 218 790 218 820 210 808 175 780 168 634 228 628 240 622 248 782 407 607 443 828 440 730 457 745 470 750 485 768 490 785 495 790 488 808 490 552 478 540 480 610 519 636 535 715 545 732 550 728 560 743 562 710 570 690 560 775 572 740 630 715 630 712 640 755 637 745 660 695 670 710 672 735 680 798 665 795 685 572 665 555 694 542 694 740 713 755 713 810 712 68 622 75 640 100 645 208 635 470 300 420 455 418 465 420 475 806 105 808 112 812 120 810 130 574 262 580 270 585 265 578 278 525 490 530 483";

function specks(list: string, dx: number, dy: number) {
  const n = list.split(" ").map(Number);
  let d = "";
  for (let i = 0; i < n.length; i += 2) {
    d += "M" + (n[i] + dx - 3) + " " + (n[i + 1] + dy) + "l" + (i % 3 === 0 ? "6 3" : "6 -1");
  }
  return d;
}

function MapCanvas() {
  const river = "M735 890L735 953 778 1000 790 1050 808 1100 840 1145 880 1190 918 1225 928 1262 935 1305 950 1318";
  const canal = "M558 396L566 418 605 435 632 442";
  const cut = "M700 478L735 504 785 540 812 548";
  return (
    <main className="flex min-w-0 flex-1 overflow-hidden border border-[#b5b5b5] bg-white">
      <svg viewBox="15 6 1626 1443" preserveAspectRatio="xMidYMid slice" className="h-full w-full" role="img" aria-label="Seattle neighborhoods by poverty rate" strokeLinejoin="round">
        <rect x="-400" y="-400" width="2500" height="2300" fill={WATER} />
        <g fill="#fff" stroke="#3c4648" strokeWidth="3">
          {LAND.map((d) => <path key={d.slice(0, 16)} d={d} />)}
          <path d={LAKE} fill={WATER} />
          <path d={MERCER} />
        </g>
        <g stroke="#2b2b2b" strokeWidth="3">
          {HOODS.map(([fill, points]) => <polygon key={points} fill={fill} points={points} />)}
        </g>
        <g fill="none" stroke="#262626" strokeWidth="3">
          <path d="M825 740L862 802M902 802V836M740 703l62 48M845 768l20 32M650 625v32M656 622v34M662 622v34" />
          <path d="M822 1125l12-8M838 1140l10-4M883 1180l4-14M930 1280l22-6M915 1300l14 6M790 868l28-4M803 930l8-12" />
        </g>
        <g fill="none" strokeLinejoin="round">
          <path d={canal} stroke="#262626" strokeWidth="11" />
          <path d={canal} stroke={WATER} strokeWidth="6" />
          <path d={cut} stroke="#262626" strokeWidth="8" />
          <path d={cut} stroke={WATER} strokeWidth="3" />
          <path d={river} stroke="#3c4648" strokeWidth="13" />
          <path d={river} stroke={WATER} strokeWidth="8" />
          <path d="M796 862L796 925 783 995" stroke="#3c4648" strokeWidth="12" />
          <path d="M796 858L796 925 783 1000" stroke={WATER} strokeWidth="7" />
        </g>
        <path d="M612 434l8-8 16-2 14 12 22 18 24 8 14 12 22 22-8 4-20-20-22-2-30-18-22-4-16-12z" fill={WATER} stroke="#222" strokeWidth="4" />
        <path d="M655 476h22v10h-20zM610 428l18-4M630 424l14 14" fill="#111" stroke="#111" strokeWidth="4" />
        <path
          d="M788 538L815 534 840 555 850 540 866 518 885 508 900 512 925 548 940 556 945 565 922 568 908 545 890 515 872 525 862 548 858 583 856 600 864 632 845 652 825 655 820 600 824 570 805 552z"
          fill={WATER}
          stroke="#333"
          strokeWidth="4"
        />
        <path d="M800 535l20 5 18 14M822 570l4 45-6 35M858 585l4 40M905 540l14 25 20 2M990 512l-12 12M1008 560l12 4" fill="none" stroke="#111" strokeWidth="5" strokeDasharray="9 4" />
        <path d="M790 790l20-4 10 14-12 14" fill={WATER} stroke="#333" strokeWidth="3" />
        <path d="M742 885l8-6 4 8 10-6 16-6M565 920l14-8M562 940l14 10M590 1270l14 6 20 4 30 0M1118 1100l12-10M1158 1355l6 14-8 2M830 1268l6 26M1024 1186l-20 12M1014 485l12 6M1232 600l6 14 4-14M1325 545l6 6-8 14" fill="none" stroke="#262626" strokeWidth="4" />
        <g fill="none" stroke="#333" strokeWidth="5">
          <path d="M1547 -5L1553 22 1565 45 1580 60 1592 85 1590 240 1582 262 1600 290 1622 320 1625 405 1650 425" />
          <path d="M1410 814L1385 832 1378 852 1400 858 1402 832 1410 814M1402 858L1411 905 1405 945" />
          <path d="M950 1318L975 1325 990 1340 985 1355 968 1375 975 1385 1030 1386 1034 1443 1060 1436 1075 1455M1284 1390L1300 1455" />
          <path d="M1338 750q-4-8 5-6M1372 1000l12-10 14 16M1376 985l8 8 12-6" strokeWidth="3" />
        </g>
        <path d={specks(SPECKS_NORTH, 810, 0) + specks(SPECKS_SOUTH, 810, 726) + "M738 12l6 4M752 20l6 -5M762 14h4M760 1328h5M788 1325h4M780 1362l6 4"} fill="none" stroke="#222" strokeWidth="5" />
        <g fill={WATER} stroke="#333" strokeWidth="3">
          <circle cx="1442" cy="331" r="5" />
          <circle cx="1428" cy="708" r="6" />
          <path d="M1380 168l14-2 8 6-10 5zM1578 794l12-2 4 8-12 2zM1476 1200l10-2 6 12-8 6zM1630 862l12-8v26l-12-8z" />
          <circle cx="840" cy="1424" r="4" />
          <circle cx="125" cy="817" r="5" />
        </g>
        <path d="M142 190q4-14 18-14l14 14q-14 4-20-2z" fill="none" stroke="#3c4648" strokeWidth="3" />
      </svg>
    </main>
  );
}

/* ---------- right side ---------- */

function Row({ id, label, h, children }: Kids & { id?: string; label: string; h: string }) {
  return (
    <div className={h + " flex shrink-0 items-center"}>
      <label htmlFor={id} className="w-[76px] shrink-0 whitespace-nowrap">{label}</label>
      {children}
    </div>
  );
}

function Graduated() {
  return (
    <svg viewBox="0 0 14 14" className="h-[14px] w-[14px]" aria-hidden="true">
      <path d="M.5.5h11v3H.5z" fill="#ffc800" stroke="#e89b00" /><path d="M2.5 5.500h11v3h-11z" fill="#f2641c" stroke="#b93d08" /><path d="M.5 10.500h11v3H.5z" fill="#b8150c" stroke="#7d0a05" />
    </svg>
  );
}

function StylingPanel() {
  return (
    <section className="flex shrink-0 flex-col">
      <DockTitle title="Layer Styling" />
      <div className="flex pt-[2px] pr-[3px] pl-[3px]">
        <Combo label="Layer" value="nhood_pov" className="h-6 flex-1" pad="pl-6" icon={<Ico className="size-[17px]"><Blob /></Ico>} />
      </div>
      <div className="flex gap-[3px] pt-[6px] pr-[3px] pl-[3px]">
        <div className="flex w-[38px] shrink-0 flex-col" role="tablist" aria-orientation="vertical">
          <button type="button" role="tab" aria-selected="true" aria-label="Symbology" className="flex h-8 items-center justify-center">
            <Ico><path d="M1 10l6-4 5 3-4 9-5-2z" fill="#f0a9b8" /><path d="M2 11l5-3 2 5-5 4z" fill="#d84a6a" /><path d="M5 17l5-4 3 5-4 3z" fill="#5aa4d8" /><path d="M8 9l4-2 2 5-4 1z" fill="#8fc97a" /><path d="M7 14l7-6 5 5-7 8z" fill="#b9bb98" stroke="#77785f" /><path d="M15 10l8-8" stroke="#8d8e6a" strokeWidth="3" /></Ico>
          </button>
          <div className="flex flex-1 flex-col items-center gap-[9px] bg-[#5a5a5a] pt-[5px]">
            <button type="button" role="tab" aria-label="Labels">
              <Ico className="size-[22px]"><path d="M1 12l5-6h16v12H6z" fill="#f9dc3c" stroke="#b79a12" /><text x="6" y="15" fontSize="8.5" fontWeight="bold" fontFamily="DejaVu Sans, sans-serif" fill="#333">abc</text></Ico>
            </button>
            <button type="button" role="tab" aria-label="3D view">
              <Ico><path d="M12 1l10 6-10 6L2 7z" fill="#f58a8a" stroke="#c22" strokeWidth="1.5" /><path d="M2 7l10 6v10L2 17z" fill="#8fe05a" stroke="#3a8a1a" /><path d="M22 7l-10 6v10l10-6z" fill="#ffe24a" stroke="#b89a10" /></Ico>
            </button>
            <button type="button" role="tab" aria-label="Diagrams">
              <Ico><path d="M9 6v9M15 6v9M5 17v-3h5M19 17v-3h-5" stroke="#b9822c" strokeWidth="3" /><rect x="7" y="1" width="10" height="7" fill="#e85050" stroke="#a22" /><rect x="1" y="16" width="10" height="7" fill="#ffe14a" stroke="#b58a10" /><rect x="13" y="16" width="10" height="7" fill="#8dbcee" stroke="#3d6ea8" /></Ico>
            </button>
            <button type="button" role="tab" aria-label="History">
              <Ico className="size-[22px]"><g transform="translate(-1 -2) scale(.72)"><Redo color="#6fae88" /></g><g transform="translate(7 7) scale(.72)"><Undo color="#e8813f" /></g></Ico>
            </button>
          </div>
        </div>
        <div className="flex min-w-0 flex-1 flex-col">
          <div className="flex h-[203px]">
            <div className="flex min-w-0 flex-1 flex-col">
              <div className="flex h-[189px] w-full flex-col overflow-hidden">
                <div className="flex h-7 shrink-0 items-start">
                  <Combo label="Renderer" value="Graduated" arrow={false} className="h-6 w-[280px] shrink-0" pad="pl-6" icon={<Graduated />} />
                </div>
                <Row id="column" label="Column" h="h-[30px]">
                  <span className={FIELD + "flex h-6 w-[200px] shrink-0 items-center pl-[3px]"}>
                    <span className="mr-[5px] text-[10px] font-bold text-[#555]">1.2</span>
                    <input id="column" defaultValue="pct_pov" className="w-24 bg-transparent outline-none" />
                  </span>
                </Row>
                <Row label="Symbol" h="h-[30px]">
                  <button type="button" className={BEVEL + "flex h-6 w-[240px] shrink-0 items-center pl-[91px]"}>
                    <span className="size-4 border border-[#666] bg-[#987db7]" />
                    Change...
                  </button>
                </Row>
                <Row id="legend" label="Legend format" h="h-[28px]">
                  <input id="legend" defaultValue="%1 - %2" className={FIELD + "mr-[7px] h-[22px] w-[106px] shrink-0 pl-[3px]"} />
                  <button type="button" className={BEVEL + "h-[22px] w-[80px] shrink-0 pl-[3px] text-left"}>Precision</button>
                </Row>
                <Row label="Method" h="h-[28px]">
                  <Combo label="Method" value="Color" arrow={false} className="h-[22px] w-[200px] shrink-0" pad="pl-[4px]" />
                </Row>
                <Row label="Color ramp" h="h-[28px]">
                  <button type="button" aria-label="Color ramp" className={BEVEL + "flex h-[22px] w-[245px] shrink-0 items-center px-1"}>
                    <span className="h-4 w-full bg-[linear-gradient(90deg,#1a9641,#a6d96a_25%,#ffffc0_50%,#fdae61_75%,#d7191c)]" />
                  </button>
                </Row>
                <div className="flex shrink-0 items-end pt-[2px]">
                  <button type="button" className="h-7 w-[61px] rounded-t-[3px] border border-[#b2b2b2] bg-[#fafafa] pb-1">Classes</button>
                  <button type="button" className="h-[26px] w-[71px] rounded-t-[3px] border border-l-0 border-[#b2b2b2] bg-[#e4e4e4] pb-[2px]">Histogram</button>
                </div>
              </div>
              <div className="flex h-[14px] border-t border-[#c4c4c4] bg-[#e4e4e4]">
                <button type="button" aria-label="Scroll left" className="flex w-[14px] items-center justify-center border-r border-[#c4c4c4] bg-[#f6f6f6]"><Triangle className="rotate-90" /></button>
                <span className="w-[121px] border-r border-[#c4c4c4] bg-[#f8f8f8]" />
                <button type="button" aria-label="Scroll right" className="ml-auto flex w-[14px] items-center justify-center border-l border-[#c4c4c4] bg-[#f6f6f6]"><Triangle className="-rotate-90" /></button>
              </div>
            </div>
            <div className="flex h-[189px] w-[14px] shrink-0 flex-col border-l border-[#c4c4c4] bg-[#e4e4e4]">
              <button type="button" aria-label="Scroll up" className="flex h-[14px] items-center justify-center border-b border-[#c4c4c4] bg-[#f6f6f6]"><Triangle up /></button>
              <span className="h-[77px] border-b border-[#c4c4c4] bg-[#f8f8f8]" />
              <button type="button" aria-label="Scroll down" className="mt-auto flex h-[14px] items-center justify-center border-t border-[#c4c4c4] bg-[#f6f6f6]"><Triangle /></button>
            </div>
          </div>
          <div className="flex items-center pt-[6px]">
            <button type="button" aria-label="Undo style" className={BEVEL + "mr-[6px] flex h-[23px] w-6 items-center justify-center"}><Ico className="size-[14px]"><Undo color="#ee7f3a" /></Ico></button>
            <button type="button" aria-label="Redo style" className={BEVEL + "mr-[6px] flex h-[23px] w-6 items-center justify-center"}><Ico className="size-[14px]"><Redo color="#76b588" /></Ico></button>
            <Check id="live" checked />
            <label htmlFor="live" className="ml-[4px] flex-1 whitespace-nowrap">Live update</label>
            <button type="button" className={BEVEL + "h-[22px] w-20"}>Apply</button>
          </div>
        </div>
      </div>
      <div className="flex h-[9px] items-center justify-center">
        <span className="h-[3px] w-[18px] bg-[radial-gradient(circle,#b5b5b5_1px,transparent_1px)] bg-[length:3px_3px]" />
      </div>
    </section>
  );
}

function Sep() {
  return <span className="mx-[3px] h-[10px] w-px bg-[#c8c8c8]" />;
}

function IdentifyPanel() {
  const s = "size-[17px]";
  return (
    <section className="flex flex-1 flex-col">
      <DockTitle title="Identify Results" />
      <div className="flex h-[29px] shrink-0 items-center gap-[1px] pl-1">
        <PanelTool label="Form view"><Ico className={s + " opacity-25"}><path d="M2 3h9v7H2zM2 14h9v7H2zM13 3h9v7h-9zM13 14h9v7h-9z" stroke="#666" /><path d="M4 6.500h5M4 17.500h5M15 6.500h5M15 17.500h5" stroke="#666" strokeWidth="1.5" /></Ico></PanelTool>
        <Sep />
        <PanelTool label="Expand tree"><Tree /></PanelTool>
        <PanelTool label="Collapse tree"><Tree up /></PanelTool>
        <PanelTool label="Expand new results"><Tree star /></PanelTool>
        <Sep />
        <PanelTool label="Clear results"><Ico className={s}><path d="M3 2h13v13H3z" fill="#fbe63c" stroke="#c4a80f" /><rect x="13" y="13" width="10" height="10" rx="2" fill="#e66" /><path d="M15.5 20.500l5-5" stroke="#fff" strokeWidth="1.5" /><circle cx="18" cy="18" r="3.5" stroke="#fff" /></Ico></PanelTool>
        <Sep />
        <PanelTool label="Copy feature"><Ico className={s + " opacity-25"}><path d="M9 2h8l4 4v11H9z" fill="#ddd" stroke="#666" /><path d="M3 6h8l4 4v12H3z" fill="#eee" stroke="#666" /><path d="M5 12h7M5 15h7M5 18h7" stroke="#666" /></Ico></PanelTool>
        <PanelTool label="Print"><Ico className={s + " opacity-25"}><path d="M6 3h12v5H6zM2 8h20v9H2z" fill="#888" stroke="#666" /><path d="M6 14h12v7H6z" fill="#eee" stroke="#666" /></Ico></PanelTool>
        <PanelTool label="Identify mode"><Ico className={s}><rect x="1.5" y="2" width="20" height="20" stroke="#777" strokeDasharray="3 2" strokeWidth="1.5" /><circle cx="9" cy="9" r="7" fill="#5588c0" /><text x="6.5" y="13.5" fontSize="12" fontStyle="italic" fontWeight="bold" fontFamily="Liberation Serif, serif" fill="#fff">i</text><Pointer /></Ico></PanelTool>
        <Triangle />
      </div>
      <div className="min-h-0 flex-1 border border-[#b9b9b9] bg-white">
        <table className="w-full border-collapse font-['Noto_Sans',sans-serif]">
          <thead>
            <tr className="h-[19px] border-b border-[#b9b9b9] bg-linear-to-b from-white to-[#ededed] text-left">
              <th scope="col" className="w-[169px] border-r border-[#c4c4c4] py-0 pl-[2px] font-normal">Feature</th>
              <th scope="col" className="py-0 pl-[2px] font-normal">Value</th>
            </tr>
          </thead>
        </table>
      </div>
      <div className="flex h-[32px] shrink-0 items-center pr-[10px] pl-1">
        <span className="w-[33px]">Mode</span>
        <Combo label="Mode" value="Top down" className="h-[22px] w-[112px]" />
        <span className="ml-auto flex items-center gap-[5px]">
          <Check id="auto-open" />
          <label htmlFor="auto-open" className="whitespace-nowrap">Auto open form</label>
        </span>
      </div>
      <div className="flex h-[32px] shrink-0 items-center pr-[5px] pb-[5px] pl-1">
        <span className="w-[29px] text-[#8c8c8c]">View</span>
        <Combo label="View" value="Tree" dim className="h-[22px] w-[72px]" />
        <button type="button" className={BEVEL + "ml-auto h-5 w-[35px]"}>Help</button>
      </div>
    </section>
  );
}

/* ---------- status bar ---------- */

function Spin({ id, value, className }: { id: string; value: string; className: string }) {
  return (
    <span className={FIELD + "flex h-[22px] shrink-0 overflow-hidden " + className}>
      <input id={id} defaultValue={value} className="min-w-0 flex-1 pl-1 outline-none" />
      <span className="flex w-[14px] flex-col items-center justify-center gap-[3px] border-l border-[#b2b2b2] bg-[#f3f3f3]">
        <button type="button" aria-label={"Increase " + id}><Triangle up className="block" /></button>
        <button type="button" aria-label={"Decrease " + id}><Triangle className="block" /></button>
      </span>
    </span>
  );
}

function StatusBar() {
  return (
    <footer className="flex h-[28px] shrink-0 items-center pl-1">
      <span className={FIELD + "flex h-[22px] w-[200px] shrink-0 items-center pl-2"}>
        <Ico className="mr-[6px] size-[13px]"><circle cx="10" cy="10" r="7.5" stroke="#888" strokeWidth="2.5" /><path d="M15.5 15.500L23 23" stroke="#888" strokeWidth="3" /></Ico>
        <input aria-label="Locate" placeholder="Type to locate (Ctrl+K)" className="w-40 outline-none placeholder:text-[#7d7d7d]" />
      </span>
      <span className="ml-[7px] w-[68px] shrink-0 overflow-hidden whitespace-nowrap">No features a</span>
      <label htmlFor="coordinate" className="ml-[4px] w-[58px] shrink-0 whitespace-nowrap">Coordinate</label>
      <input id="coordinate" defaultValue="1267161,272641" className={FIELD + "h-[22px] w-[97px] shrink-0 text-center"} />
      <Ico className="mx-[5px] size-4"><path d="M2 3l10 8M4 9l8 4M6 1l6 9" stroke="#333" strokeWidth="2.5" /><ellipse cx="13" cy="15" rx="6" ry="8" transform="rotate(-25 13 15)" fill="#ddd" stroke="#333" strokeWidth="2" /><path d="M8 12l9-5M12 3l4 6M20 3l-4 5" stroke="#333" strokeWidth="2" /><circle cx="14" cy="17" r="2.5" fill="#555" /></Ico>
      <span className="ml-[7px] w-[29px] shrink-0">Scale</span>
      <span className="grid h-[22px] w-[81px] shrink-0 items-center">
        <select aria-label="Scale" className={FIELD + "col-start-1 row-start-1 h-full w-full appearance-none pl-[3px]"} defaultValue="1:220152">
          <option>1:220152</option>
        </select>
        <span className="pointer-events-none col-start-1 row-start-1 flex h-[20px] w-5 items-center justify-center justify-self-end border-l border-[#b2b2b2]"><Triangle /></span>
      </span>
      <Ico className="mr-[5px] ml-[9px] size-4"><path d="M6 12V8a6 6 0 0 1 12 0v4" stroke="#777" strokeWidth="2.5" /><rect x="3" y="11" width="18" height="11" rx="2" fill="#555" /></Ico>
      <label htmlFor="magnifier" className="w-[49px] shrink-0">Magnifier</label>
      <Spin id="magnifier" value="100%" className="w-[88px]" />
      <label htmlFor="rotation" className="ml-2 w-[51px] shrink-0">Rotation</label>
      <Spin id="rotation" value="0.0 °" className="w-[84px]" />
      <span className="ml-[6px] flex items-center gap-1">
        <Check id="render" checked />
        <label htmlFor="render">Render</label>
      </span>
      <button type="button" className="ml-[16px] flex items-center gap-[3px] whitespace-nowrap">
        <Ico className="size-4"><circle cx="12" cy="12" r="9.5" fill="#666" /><ellipse cx="12" cy="12" rx="4.5" ry="9.5" stroke="#ddd" /><path d="M2 12h20M4 7.500h16M4 16.500h16M12 2v20" stroke="#ddd" /></Ico>
        EPSG:2926
      </button>
      <button type="button" aria-label="Messages" className="ml-[18px]">
        <Ico className="size-4"><path d="M12 2c7 0 11 3.500 11 8s-4 8-9 8l-1 5-5-5.500C3 16 1 13.500 1 10c0-4.500 4-8 11-8z" fill="#555" /><path d="M5.5 10h3M10.500 10h3M15.500 10h3" stroke="#fff" strokeWidth="3" /></Ico>
      </button>
      <span className="mt-auto mr-[2px] mb-1 ml-auto size-[9px] bg-[radial-gradient(circle,#b5b5b5_1px,transparent_1px)] bg-[length:3px_3px]" />
    </footer>
  );
}

export default function App() {
  return (
    <div className="flex h-screen min-h-[600px] w-full flex-col overflow-hidden border border-black bg-[#efefef] font-['Open_Sans',sans-serif] text-[11px] leading-4 text-black">
      <TitleBar />
      <MenuBar />
      <ToolbarOne />
      <ToolbarTwo />
      <div className="flex min-h-0 flex-1">
        <LayersPanel />
        <Splitter />
        <MapCanvas />
        <Splitter />
        <aside className="flex w-[274px] shrink-0 flex-col">
          <StylingPanel />
          <IdentifyPanel />
        </aside>
      </div>
      <StatusBar />
    </div>
  );
}
